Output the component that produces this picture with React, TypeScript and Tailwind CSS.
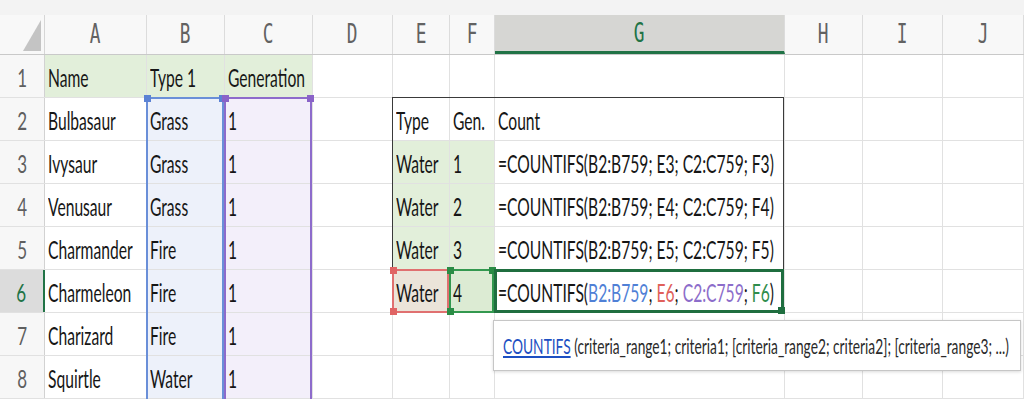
import React from 'react';

const COLS = ['A', 'B', 'C', 'D', 'E', 'F', 'G', 'H', 'I', 'J'];
const WIDTHS = ['w-[102px]', 'w-[78px]', 'w-[88px]', 'w-[80px]', 'w-[57px]', 'w-[45px]', 'w-[290px]', 'w-[78px]', 'w-[80px]', 'w-[81px]'];

const GREEN = 'bg-[#e2efda]';
const BLUE = 'bg-[#edf1fa]';
const PURPLE = 'bg-[#f3effa]';

type Corner = 'tl' | 'tr' | 'bl' | 'br';
type CellData = { text?: React.ReactNode; bg?: string; deco?: string; handles?: Corner[]; handleColor?: string };

const HPOS: Record<Corner, string> = {
  tl: '-left-[4px] -top-[4px]',
  tr: '-right-[4px] -top-[4px]',
  bl: '-left-[4px] -bottom-[4px]',
  br: '-right-[4px] -bottom-[4px]',
};

const formula = (n: number) => `=COUNTIFS(B2:B759; E${n}; C2:C759; F${n})`;

const activeFormula = (
  <>
    =COUNTIFS(<span className="text-[#4f80d6]">B2:B759</span>; <span className="text-[#e0605a]">E6</span>;{' '}
    <span className="text-[#8c6dca]">C2:C759</span>; <span className="text-[#2f8d4c]">F6</span>)
  </>
);

// B and C columns are the referenced ranges (coloured outlines)
const typeCell = (text: string, first = false): CellData => ({
  text,
  bg: BLUE,
  deco: first ? 'border-x-2 border-t-2 border-[#6a8fd8]' : 'border-x-2 border-[#6a8fd8]',
  handles: first ? ['tl', 'tr'] : undefined,
  handleColor: 'bg-[#5b82d4]',
});
const genCell = (first = false): CellData => ({
  text: '1',
  bg: PURPLE,
  deco: first ? 'border-x-2 border-t-2 border-[#8d6bcb]' : 'border-x-2 border-[#8d6bcb]',
  handles: first ? ['tl', 'tr'] : undefined,
  handleColor: 'bg-[#8a63c8]',
});

const OUT = 'border-[#3a3a3a]';

const rows: CellData[][] = [
  [{ text: 'Name', bg: GREEN }, { text: 'Type 1', bg: GREEN }, { text: 'Generation', bg: GREEN }],
  [
    { text: 'Bulbasaur' }, typeCell('Grass', true), genCell(true), {},
    { text: 'Type', deco: `border-l-[1.5px] border-t-[1.5px] ${OUT}` },
    { text: 'Gen.', deco: `border-t-[1.5px] ${OUT}` },
    { text: 'Count', deco: `border-t-[1.5px] border-r-[1.5px] ${OUT}` },
  ],
  [
    { text: 'Ivysaur' }, typeCell('Grass'), genCell(), {},
    { text: 'Water', bg: GREEN, deco: `border-l-[1.5px] ${OUT}` },
    { text: '1', bg: GREEN },
    { text: formula(3), deco: `border-r-[1.5px] ${OUT}` },
  ],
  [
    { text: 'Venusaur' }, typeCell('Grass'), genCell(), {},
    { text: 'Water', bg: GREEN, deco: `border-l-[1.5px] ${OUT}` },
    { text: '2', bg: GREEN },
    { text: formula(4), deco: `border-r-[1.5px] ${OUT}` },
  ],
  [
    { text: 'Charmander' }, typeCell('Fire'), genCell(), {},
    { text: 'Water', bg: GREEN, deco: `border-l-[1.5px] ${OUT}` },
    { text: '3', bg: GREEN },
    { text: formula(5), deco: `border-r-[1.5px] ${OUT}` },
  ],
  [
    { text: 'Charmeleon' }, typeCell('Fire'), genCell(), {},
    { text: 'Water', bg: 'bg-[#ebe4d9]', deco: 'border-2 border-[#e07070]', handles: ['tl', 'bl'], handleColor: 'bg-[#e06464]' },
    { text: '4', bg: 'bg-[#dcebd3]', deco: 'border-2 border-[#33984f]', handles: ['tl', 'bl', 'tr'], handleColor: 'bg-[#2a8c45]' },
    { text: activeFormula, deco: 'border-[3px] border-[#1f6e3f]', handles: ['br'], handleColor: 'bg-[#1f6e3f]' },
  ],
  [{ text: 'Charizard' }, typeCell('Fire'), genCell()],
  [{ text: 'Squirtle' }, typeCell('Water'), genCell()],
];

export default function App() {
  return (
    <div className="relative w-[1024px] h-[399px] overflow-hidden bg-white font-['Lato',sans-serif] text-[25px] text-[#161616]">
      <div className="h-[15px] bg-[#f3f3f3]" />

      {/* column headers */}
      <div className="flex h-[40px] bg-[#f8f8f8] border-b border-[#c9c9c9]">
        <div className="w-[45px] shrink-0 border-r border-[#d6d6d6]">
          <svg width="45" height="39">
            <polygon points="41,5 41,36 23,36" fill="#c4c4c4" />
          </svg>
        </div>
        {COLS.map((c, i) => (
          <div
            key={c}
            className={`${WIDTHS[i]} shrink-0 flex items-center justify-center border-r border-[#dcdcdc] font-['DejaVu_Sans_Mono',monospace] text-[27px] ${
              c === 'G' ? 'bg-[#d6d6d3] text-[#217346] border-b-[3px] border-b-[#217346]' : 'text-[#626262]'
            }`}
          >
            <span className="inline-block scale-x-[0.66]">{c}</span>
          </div>
        ))}
      </div>

      {/* rows */}
      {rows.map((row, r) => (
        <div key={r} className="flex h-[43px] border-b border-[#e1e1e1]">
          <div
            className={`w-[45px] shrink-0 flex items-center justify-center pt-1 ${
              r === 5
                ? 'bg-[#dcdcdc] text-[#217346] border-r-[2px] border-[#217346]'
                : 'bg-[#f7f7f7] text-[#5f5f5f] border-r border-[#d2d2d2]'
            }`}
          >
            <span className="inline-block scale-x-[0.68]">{r + 1}</span>
          </div>
          {COLS.map((c, i) => {
            const cell = row[i] || {};
            return (
              <div
                key={c}
                className={`relative ${WIDTHS[i]} shrink-0 flex items-center pt-1 pl-[3px] border-r border-[#e1e1e1] ${cell.bg || ''}`}
              >
                {cell.text !== undefined && (
                  <span className="inline-block whitespace-nowrap origin-left scale-x-[0.625]">{cell.text}</span>
                )}
                {cell.deco && (
                  <div className={`absolute z-10 -left-px -top-px right-0 -bottom-px ${cell.deco}`}>
                    {cell.handles?.map((h) => (
                      <div key={h} className={`absolute w-[7px] h-[7px] ${HPOS[h]} ${cell.handleColor}`} />
                    ))}
                  </div>
                )}
              </div>
            );
          })}
        </div>
      ))}

      {/* function tooltip */}
      <div className="absolute z-20 left-[493px] top-[320px] w-[528px] h-[51px] bg-white border border-[#c6c6c6] shadow-[0_1px_3px_rgba(0,0,0,0.15)] flex items-center pl-[9px] text-[21px] text-[#2a2a2a]">
        <span className="inline-block whitespace-nowrap origin-left scale-x-[0.655]">
          <span className="text-[#1d4fc2] underline">COUNTIFS</span> (criteria_range1; criteria1; [criteria_range2; criteria2]; [criteria_range3; ...)
        </span>
      </div>
    </div>
  );
}
